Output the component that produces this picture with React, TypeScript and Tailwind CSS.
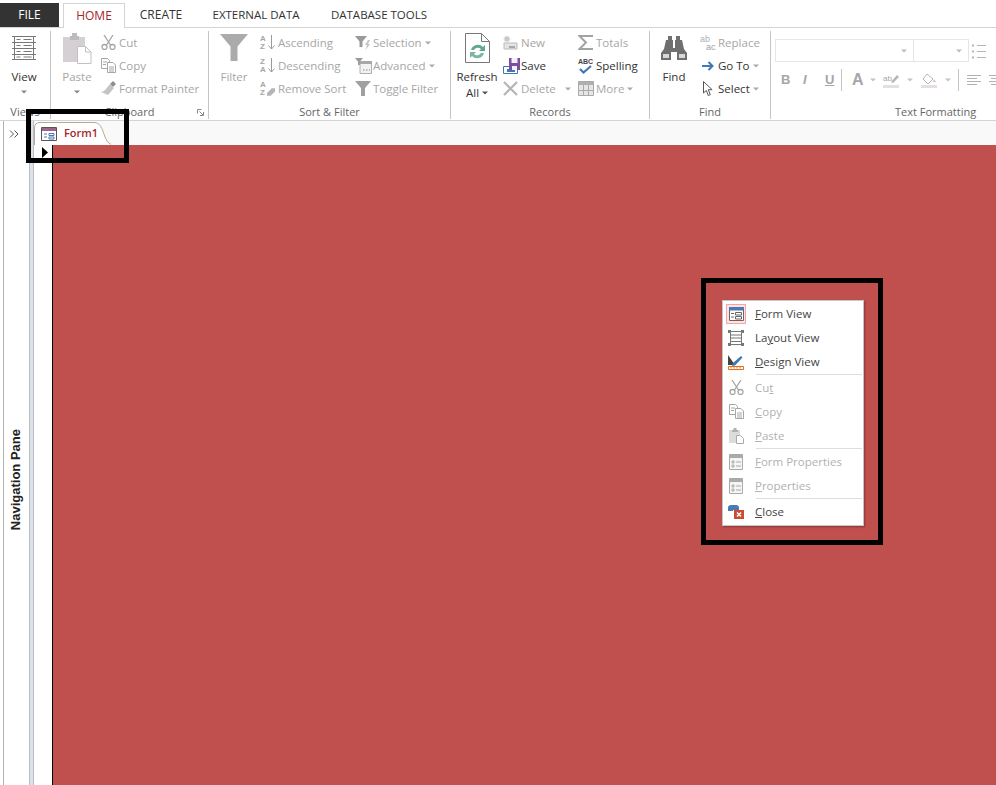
import type { ReactNode } from 'react';

const DIS = '#a6a6a6';
const DIS_LIGHT = '#d4d0d4';

function Caret({ className = '' }: { className?: string }) {
  return (
    <svg width="6" height="4" viewBox="0 0 6 4" className={className}>
      <path d="M0 .5h6L3 3.500z" fill="currentColor" />
    </svg>
  );
}

// ---- ribbon icons ----
const ViewIcon = () => (
  <svg width="26" height="28" viewBox="0 0 26 28" fill="none" stroke="#777">
    <path d="M3.500 2.500h19v23h-19z" />
    <path d="M1 2.500h24M1 8.500h24M1 14.500h24M1 20.500h24M1 25.500h24" />
    <path d="M12.500 5.500h8M12.500 11.500h8M12.500 17.500h8M12.500 23h8M5.500 5.500h4M5.500 11.500h4M5.500 17.500h4M5.500 23h4" />
  </svg>
);
const PasteIcon = () => (
  <svg width="29" height="31" viewBox="0 0 29 31">
    <path d="M0 4h22v25H0z" fill={DIS_LIGHT} />
    <path d="M7 3h2V0h5v3h2v4H7z" fill="#bdb9bd" />
    <path d="M14.500 13.500h8l5.500 5.500v11.500H14.500z" fill="#fff" stroke="#c4c0c4" />
    <path d="M22.500 13.500v5.500H28" fill="none" stroke="#c4c0c4" />
  </svg>
);
const CutIcon = ({ c = DIS }: { c?: string }) => (
  <svg width="15" height="15" viewBox="0 0 15 15" fill="none" stroke={c} strokeWidth="1.300">
    <path d="M3 0l6.500 10M12 0L5.500 10" />
    <circle cx="3.500" cy="12" r="2.500" />
    <circle cx="11.500" cy="12" r="2.500" />
  </svg>
);
const CopyIcon = ({ c = DIS }: { c?: string }) => (
  <svg width="15" height="15" viewBox="0 0 15 15" fill="#fff" stroke={c}>
    <path d="M.5.500h6l2 2v8h-8z" />
    <path d="M6.500 4.500h5.500l2.500 2.500v7.500h-8z" />
    <path d="M2 4h4M2 6.500h3M8 9h5M8 11h5M8 13h5" />
  </svg>
);
const PainterIcon = () => (
  <svg width="18" height="15" viewBox="0 0 18 15">
    <path d="M12 0l3 3-3 3-3-3z" fill="#8d8d8d" />
    <path d="M9 3l4 4-6 7-7-3c3 0 5-3 9-8z" fill="#c4c4c4" />
  </svg>
);
const FilterIcon = () => (
  <svg width="28" height="28" viewBox="0 0 28 28">
    <path d="M0 0h28L17.500 12.500V27h-7V12.500z" fill="#ababab" />
  </svg>
);
const SortIcon = ({ top, bottom }: { top: string; bottom: string }) => (
  <span className="relative flex h-[15px] w-[15px] shrink-0 font-['Liberation_Sans',sans-serif] text-[8px] leading-[7.500px] text-[#a6a6a6]">
    <span className="flex w-[7px] flex-col font-bold">
      <span>{top}</span>
      <span>{bottom}</span>
    </span>
    <svg width="7" height="15" viewBox="0 0 7 15" fill="none" stroke="#9a9a9a" className="ml-[1px]">
      <path d="M3.500 0v14M.5 10.500l3 3.500 3-3.500" />
    </svg>
  </span>
);
const RemoveSortIcon = () => (
  <span className="relative flex h-[15px] w-[15px] shrink-0 font-['Liberation_Sans',sans-serif] text-[8px] leading-[7.500px] text-[#a6a6a6]">
    <span className="flex w-[7px] flex-col font-bold">
      <span>A</span>
      <span>Z</span>
    </span>
    <svg width="9" height="8" viewBox="0 0 9 8" className="mt-[7px]">
      <path d="M5 0h4v3L4 8H0V5z" fill="#b5b5b5" />
    </svg>
  </span>
);
const SelectionIcon = () => (
  <svg width="16" height="16" viewBox="0 0 16 16">
    <path d="M0 1h12L7.500 6.500V12H4.500V6.500z" fill="#9a9a9a" />
    <path d="M13 5l-3 5h2l-1.500 5L15 9h-2l2-4z" fill="#c4c4c4" />
  </svg>
);
const AdvancedIcon = () => (
  <svg width="17" height="16" viewBox="0 0 17 16">
    <path d="M0 0h8L5 3.500V7H3V3.500z" fill="#9a9a9a" />
    <path d="M5 3.500h11.500v12H5z" fill="#f2f2f2" stroke="#b0b0b0" />
    <path d="M5 3h12v3H5z" fill="#a8a8a8" />
    <path d="M8 12h1.500M11 12h1.500M14 12h1" stroke="#888" />
  </svg>
);
const ToggleIcon = () => (
  <svg width="16" height="15" viewBox="0 0 16 15">
    <path d="M0 0h16L10 7v8H6V7z" fill="#a0a0a0" />
  </svg>
);
const RefreshIcon = () => (
  <svg width="25" height="31" viewBox="0 0 25 31" fill="none">
    <path d="M.5.500h16l8 8v21H.5z" fill="#fff" stroke="#777" />
    <path d="M16.500.500v8h8" stroke="#777" />
    <path d="M6 17a7 7 0 0 1 12-3l2-2v6h-6l2-2a4.500 4.500 0 0 0-7 1z" fill="#62a88c" />
    <path d="M19 20a7 7 0 0 1-12 3l-2 2v-6h6l-2 2a4.500 4.500 0 0 0 7-1z" fill="#7bb7a0" />
  </svg>
);
const NewIcon = () => (
  <svg width="15" height="15" viewBox="0 0 15 15">
    <path d="M4 0l.8 2 2-.8L6 3l2 1-2 .8.800 2-2-.8L4 8l-.8-2-2 .8.800-2-2-.8 2-1-.800-1.800 2 .8z" fill="#c8c8c8" />
    <path d="M1 8h13v6H1z" fill="#e4e4e4" stroke="#bbb" />
    <path d="M6 11h6v2H6z" fill="#a8a8a8" />
  </svg>
);
const SaveIcon = () => (
  <svg width="18" height="16" viewBox="0 0 18 16">
    <path d="M.5 8.500h14v7H.5z" fill="#fff" stroke="#3f79b4" />
    <path d="M4 11h8v3H4z" fill="#3f79b4" />
    <path d="M6 0h11v12H6z" fill="#7c4ea0" />
    <path d="M8.500 0h6v5h-6zM9 8h5v4H9z" fill="#f4eef8" />
  </svg>
);
const DeleteIcon = () => (
  <svg width="15" height="15" viewBox="0 0 15 15" fill="none" stroke="#b4b4b4" strokeWidth="2.200">
    <path d="M1 1l13 13M14 1L1 14" />
  </svg>
);
const TotalsIcon = () => (
  <svg width="15" height="15" viewBox="0 0 15 15" fill="none" stroke="#a3a3a3" strokeWidth="2">
    <path d="M14 2V1H1.500L8 7.500 1.500 14H14v-1" />
  </svg>
);
const SpellIcon = () => (
  <span className="relative flex h-[16px] w-[15px] shrink-0 flex-col font-['Liberation_Sans',sans-serif] text-[7px] font-bold leading-[7px] text-[#444]">
    ABC
    <svg width="13" height="9" viewBox="0 0 13 9" fill="none" stroke="#3f79b4" strokeWidth="2.200" className="ml-[1px]">
      <path d="M1 4l3.500 3.500L12 1" />
    </svg>
  </span>
);
const MoreIcon = () => (
  <svg width="16" height="15" viewBox="0 0 16 15" fill="#e6e6e6" stroke="#aaa">
    <path d="M.5.500h15v14H.5z" />
    <path d="M1 1h14v3H1z" fill="#b0b0b0" stroke="none" />
    <path d="M.5 9.500h15M5.500 4v10M10.500 4v10" />
  </svg>
);
const BinocularIcon = () => (
  <svg width="26" height="24" viewBox="0 0 26 24" fill="#6f6f6f">
    <path d="M7 0h4v4H7zM15 0h4v4h-4z" />
    <path d="M5 4h7v8h2V4h7l2 9 3 4v7H16v-8h-6v8H0v-7l3-4z" />
    <path d="M2 18h6v4H2zM18 18h6v4h-6z" fill="#d8d8d8" />
  </svg>
);
const ReplaceIcon = () => (
  <span className="flex h-[15px] w-[17px] shrink-0 flex-col font-['Liberation_Sans',sans-serif] text-[9px] leading-[8px] text-[#b0b0b0]">
    <span>ab</span>
    <span className="pl-[6px] text-[#a0a0a0]">ac</span>
  </span>
);
const GoToIcon = () => (
  <svg width="12" height="10" viewBox="0 0 12 10" fill="none" stroke="#3f79b4" strokeWidth="2" className="ml-[2px]">
    <path d="M0 5h10M6.500 1L10.500 5l-4 4" />
  </svg>
);
const SelectIcon = () => (
  <svg width="10" height="16" viewBox="0 0 10 16" fill="#fff" stroke="#555" className="ml-[3px]">
    <path d="M.5.500v11.500l2.800-2.500 2 5 2-.8-2-5h3.800z" />
  </svg>
);

// ---- menu icons ----
const FormViewIcon = () => (
  <svg width="20" height="20" viewBox="0 0 20 20">
    <path d="M.5.500h19v19H.5z" fill="#fce4e4" stroke="#f5a3a3" />
    <path d="M3.500 3.500h14v13h-14z" fill="#fff" stroke="#666" />
    <path d="M3 3h15v3.500H3z" fill="#4a7ab0" />
    <path d="M5 9.500h3M5 13h3M9.500 8.500h6v2.500h-6zM9.500 12.500h6V15h-6z" fill="none" stroke="#666" />
  </svg>
);
const LayoutIcon = () => (
  <svg width="16" height="16" viewBox="0 0 16 16" fill="none" stroke="#777">
    <path d="M2.500 1.500h11v13h-11zM2.500 5h11M2.500 8h11M2.500 11.500h11" />
    <path d="M0 0h3v3H0zM13 0h3v3h-3zM0 13h3v3H0zM13 13h3v3h-3z" fill="#777" stroke="none" />
  </svg>
);
const DesignIcon = () => (
  <svg width="16" height="16" viewBox="0 0 16 16">
    <path d="M0 1l7 10H0z" fill="#444" />
    <path d="M5 9l8-7 1.500 1.500-7.500 8L4 12z" fill="#3f79b4" />
    <path d="M.5 12.500h15v3H.5z" fill="#fff" stroke="#e0701c" />
    <path d="M3 13v1.500M6 13v1.500M9 13v1.500M12 13v1.500" stroke="#e0701c" />
  </svg>
);
const MenuPasteIcon = () => (
  <svg width="15" height="16" viewBox="0 0 15 16">
    <path d="M0 2h11v13H0z" fill="#dcdcdc" />
    <path d="M3 2h1.500V0h3v2H9v2H3z" fill="#b0b0b0" />
    <path d="M7.500 7.500h4l3 3v5h-7z" fill="#fff" stroke="#aaa" />
  </svg>
);
const PropsIcon = () => (
  <svg width="14" height="16" viewBox="0 0 14 16" fill="none" stroke="#aaa">
    <path d="M.5.500h13v15H.5z" fill="#f5f5f5" />
    <path d="M1 1h12v3H1z" fill="#aaa" stroke="none" />
    <path d="M3 7h2v2H3zM3 11h2v2H3zM7 8h5M7 12h5" />
  </svg>
);
const CloseIcon = () => (
  <svg width="16" height="14" viewBox="0 0 16 14">
    <path d="M0 3c0-2 1-3 3-3h5c2 0 3 1 3 3v2H5v1H0z" fill="#4a7ab0" />
    <path d="M6 5h10v9H6z" fill="#cc4b32" />
    <path d="M9 7.500l4 4M13 7.500l-4 4" stroke="#fff" strokeWidth="1.500" />
  </svg>
);

// ---- ribbon pieces ----
function Group({ label, className, children }: { label: string; className: string; children: ReactNode }) {
  return (
    <div className={`relative flex shrink-0 flex-col border-r border-[#c6c6c6] ${className}`}>
      <div className="flex h-[70px]">{children}</div>
      <div className="flex-1 pt-[3px] text-center text-[11px] leading-[15px] text-[#666]">{label}</div>
    </div>
  );
}

function BigButton({ icon, label, caret, dim, className = '' }: { icon: ReactNode; label: string; caret?: boolean; dim?: boolean; className?: string }) {
  return (
    <div className={`flex flex-col items-center ${dim ? 'text-[#a6a6a6]' : 'text-[#333]'} ${className}`}>
      <div className="flex h-[34px] items-center">{icon}</div>
      <div className="pt-[4px] text-[11.500px] leading-[16px]">{label}</div>
      {caret && <Caret className="mt-[5px] text-[#888]" />}
    </div>
  );
}

function SmallButton({ icon, label, dim, caret }: { icon: ReactNode; label: string; dim?: boolean; caret?: boolean }) {
  return (
    <div className={`flex h-[23px] items-center whitespace-nowrap text-[11.500px] ${dim ? 'text-[#a6a6a6]' : 'text-[#333]'}`}>
      <span className="flex w-[18px] shrink-0">{icon}</span>
      {label}
      {caret && <Caret className="ml-[3px] text-[#aaa]" />}
    </div>
  );
}

function MenuItem({ icon, before = '', mark, after, dim }: { icon: ReactNode; before?: string; mark: string; after: string; dim?: boolean }) {
  return (
    <div className={`flex h-[24px] shrink-0 items-center text-[11.500px] ${dim ? 'text-[#b1b1b1]' : 'text-[#444]'}`}>
      <span className="flex w-[26px] shrink-0 justify-center">{icon}</span>
      <span className="ml-[6px] whitespace-pre">
        {before}
        <span className="underline">{mark}</span>
        {after}
      </span>
    </div>
  );
}

const MenuLine = () => (
  <div className="ml-[33px] mr-[1px] h-[2px] shrink-0 border-t border-[#dedede]" />
);

export default function App() {
  return (
    <div className="relative flex h-[785px] w-[996px] flex-col overflow-hidden bg-white font-['Open_Sans',sans-serif]">
      {/* Tabs */}
      <div className="flex h-[28px] shrink-0 whitespace-nowrap border-b border-[#d4d4d4] pt-[3px] text-[12px] text-[#333]">
        <div className="flex w-[59px] items-center justify-center bg-[#333333] text-white">FILE</div>
        <div className="ml-[4px] flex h-[25px] w-[62px] items-center justify-center border border-b-0 border-[#d4d4d4] bg-white text-[#a4262c]">HOME</div>
        <div className="flex w-[72px] items-center justify-center">CREATE</div>
        <div className="ml-[14px] flex w-[90px] items-center justify-center text-[11.500px]">EXTERNAL DATA</div>
        <div className="ml-[29px] flex w-[98px] items-center justify-center text-[11.500px]">DATABASE TOOLS</div>
      </div>

      {/* Ribbon */}
      <div className="flex h-[93px] shrink-0 border-b border-[#d4d4d4] pb-[1px] pt-[3px]">
        <Group label="Views" className="w-[51px]">
          <BigButton icon={<ViewIcon />} label="View" caret className="w-[48px]" />
        </Group>
        <Group label="Clipboard" className="w-[158px]">
          <BigButton icon={<PasteIcon />} label="Paste" caret dim className="ml-[7px] w-[38px]" />
          <div className="ml-[5px] flex flex-col">
            <SmallButton icon={<CutIcon />} label="Cut" dim />
            <SmallButton icon={<CopyIcon />} label="Copy" dim />
            <SmallButton icon={<PainterIcon />} label="Format Painter" dim />
          </div>
          <svg width="7" height="7" viewBox="0 0 7 7" fill="none" stroke="#888" className="absolute bottom-[3px] right-[4px]">
            <path d="M.5.500h4M.5.500v4M2.500 2.500l3.500 3.500M6.500 3v3.500H3" />
          </svg>
        </Group>
        <Group label="Sort & Filter" className="w-[242px]">
          <BigButton icon={<FilterIcon />} label="Filter" dim className="ml-[8px] w-[34px]" />
          <div className="ml-[9px] flex w-[95px] flex-col">
            <SmallButton icon={<SortIcon top="A" bottom="Z" />} label="Ascending" dim />
            <SmallButton icon={<SortIcon top="Z" bottom="A" />} label="Descending" dim />
            <SmallButton icon={<RemoveSortIcon />} label="Remove Sort" dim />
          </div>
          <div className="flex flex-col">
            <SmallButton icon={<SelectionIcon />} label="Selection" dim caret />
            <SmallButton icon={<AdvancedIcon />} label="Advanced" dim caret />
            <SmallButton icon={<ToggleIcon />} label="Toggle Filter" dim />
          </div>
        </Group>
        <Group label="Records" className="w-[199px]">
          <div className="ml-[3px] flex w-[46px] flex-col items-center text-[#333]">
            <div className="flex h-[34px] items-center"><RefreshIcon /></div>
            <div className="pt-[4px] text-[11.500px] leading-[16px]">Refresh</div>
            <div className="flex items-center text-[11.500px] leading-[15px]">All<Caret className="ml-[3px] text-[#555]" /></div>
          </div>
          <div className="ml-[3px] flex w-[75px] flex-col">
            <SmallButton icon={<NewIcon />} label="New" dim />
            <SmallButton icon={<SaveIcon />} label="Save" />
            <div className="flex items-center">
              <SmallButton icon={<DeleteIcon />} label="Delete" dim />
              <Caret className="ml-[9px] text-[#aaa]" />
            </div>
          </div>
          <div className="flex flex-col">
            <SmallButton icon={<TotalsIcon />} label="Totals" dim />
            <SmallButton icon={<SpellIcon />} label="Spelling" />
            <SmallButton icon={<MoreIcon />} label="More" dim caret />
          </div>
        </Group>
        <Group label="Find" className="w-[121px]">
          <BigButton icon={<BinocularIcon />} label="Find" className="ml-[5px] w-[38px]" />
          <div className="ml-[7px] flex flex-col">
            <SmallButton icon={<ReplaceIcon />} label="Replace" dim />
            <SmallButton icon={<GoToIcon />} label="Go To" caret />
            <SmallButton icon={<SelectIcon />} label="Select" caret />
          </div>
        </Group>
        <div className="flex min-w-0 flex-1 flex-col overflow-hidden">
          <div className="flex h-[70px] flex-col pl-[4px] pt-[8px]">
            <div className="flex h-[23px] w-[260px] items-center">
              <div className="flex h-[23px] w-[139px] items-center justify-end border border-[#e6e6e6] pr-[6px] text-[#bbb]"><Caret /></div>
              <div className="flex h-[23px] w-[55px] items-center justify-end border border-l-0 border-[#e6e6e6] pr-[6px] text-[#bbb]"><Caret /></div>
              <svg width="14" height="16" viewBox="0 0 14 16" className="ml-[3px]" fill="none" stroke="#b5b5b5">
                <path d="M5 2.500h9M5 8.500h9M5 14.500h9" />
                <path d="M0 1.500h2v2H0zM0 7.500h2v2H0zM0 13.500h2v2H0z" fill="#b5b5b5" stroke="none" />
              </svg>
            </div>
            <div className="mt-[7px] flex h-[22px] w-[260px] items-center text-[#a6a6a6]">
              <span className="ml-[6px] w-[22px] font-['Liberation_Sans',sans-serif] text-[13px] font-bold">B</span>
              <span className="w-[22px] font-['Liberation_Sans',sans-serif] text-[13px] font-bold italic">I</span>
              <span className="w-[16px] font-['Liberation_Sans',sans-serif] text-[13px] font-bold underline">U</span>
              <span className="h-[22px] w-px bg-[#c6c6c6]" />
              <span className="ml-[10px] w-[18px] font-['Liberation_Sans',sans-serif] text-[16px] font-bold">A</span>
              <Caret className="text-[#c4c4c4]" />
              <svg width="16" height="15" viewBox="0 0 16 15" className="ml-[7px]">
                <path d="M0 12h16v3H0z" fill="#e4dfe4" />
                <path d="M8 9l6-7 2 2-6 6z" fill="#b5b5b5" />
                <text x="0" y="8" fontSize="8" fill="#a6a6a6" fontFamily="Liberation Sans">ab</text>
              </svg>
              <Caret className="ml-[8px] text-[#c4c4c4]" />
              <svg width="16" height="15" viewBox="0 0 16 15" className="ml-[8px]" fill="none">
                <path d="M0 12h16v3H0z" fill="#e8dde0" />
                <path d="M6 1l6 5-5 5-5-5z" stroke="#b5b5b5" />
                <path d="M13 6l2 3h-3z" fill="#c4c4c4" />
              </svg>
              <Caret className="ml-[8px] text-[#c4c4c4]" />
              <span className="ml-[7px] h-[22px] w-px bg-[#c6c6c6]" />
              <svg width="14" height="11" viewBox="0 0 14 11" className="ml-[8px] shrink-0" stroke="#b0b0b0">
                <path d="M0 .5h14M0 3.500h10M0 6.500h14M0 9.500h10" />
              </svg>
              <svg width="14" height="11" viewBox="0 0 14 11" className="ml-[8px] shrink-0" stroke="#b0b0b0">
                <path d="M0 .5h14M2 3.500h10M0 6.500h14M2 9.500h10" />
              </svg>
            </div>
          </div>
          <div className="flex-1 whitespace-nowrap pl-[124px] pt-[3px] text-[11px] leading-[15px] text-[#666]">Text Formatting</div>
        </div>
      </div>

      {/* Document area */}
      <div className="flex min-h-0 flex-1">
        <div className="ml-[3px] flex w-[26px] shrink-0 flex-col border-l border-[#b4b4b4]">
          <div className="flex h-[24px] items-center justify-center pr-[5px] pt-[1px]">
            <svg width="10" height="8" viewBox="0 0 10 8" fill="none" stroke="#555">
              <path d="M1 .5l3.500 3.500L1 7.500M5.500.5L9 4 5.500 7.500" />
            </svg>
          </div>
          <div className="flex flex-1 items-center justify-center pr-[2px] pt-[29px]">
            <span className="rotate-180 font-['Liberation_Sans',sans-serif] text-[13px] font-bold text-[#222] [writing-mode:vertical-rl]">Navigation Pane</span>
          </div>
        </div>
        <div className="w-[5px] shrink-0 border-x border-[#b9bec6] bg-[#dde1e8]" />
        <div className="flex min-w-0 flex-1 flex-col">
          <div className="flex h-[24px] shrink-0 items-end bg-[#f9f9f9]">
            <div className="relative flex h-[23px] w-[77px] items-center pl-[7px]">
              <svg width="77" height="23" viewBox="0 0 77 23" fill="#fff" stroke="#b8ab95" className="absolute left-0 top-0">
                <path d="M.5 23V6Q.5.500 6 .500H60C66 .500 68 6 71 15Q73 21 77 22.500" />
              </svg>
              <svg width="16" height="14" viewBox="0 0 16 14" className="relative">
                <path d="M.5.500h15v13H.5z" fill="#fff" stroke="#555" />
                <path d="M1 1h14v3H1z" fill="#a0648c" />
                <path d="M3 7h3M3 10h3M8 6.500h5v2H8zM8 10h5v2H8z" fill="none" stroke="#4a7ab0" />
              </svg>
              <span className="relative ml-[7px] text-[11px] font-semibold text-[#a4262c]">Form1</span>
            </div>
          </div>
          <div className="flex min-h-0 flex-1">
            <div className="relative w-[19px] shrink-0 border-r border-black">
              <svg width="6" height="11" viewBox="0 0 6 11" className="absolute left-[8px] top-[2px]">
                <path d="M0 0l6 5.500L0 11z" fill="#000" />
              </svg>
            </div>
            <div className="flex-1 bg-[#c0504d]" />
          </div>
        </div>
      </div>

      {/* Annotation box round the form tab */}
      <div className="absolute left-[26px] top-[109px] h-[54px] w-[103px] border-[5px] border-black" />

      {/* Annotation box with the context menu inside */}
      <div className="absolute left-[701px] top-[278px] flex h-[267px] w-[182px] items-center justify-center border-[5px] border-black pl-[2px] pt-[2px]">
        <div className="flex h-[226px] w-[142px] flex-col border border-[#c6c6c6] bg-white py-[1px] shadow-[1px_1px_2px_rgba(0,0,0,0.3)]">
          <MenuItem icon={<FormViewIcon />} mark="F" after="orm View" />
          <MenuItem icon={<LayoutIcon />} before="La" mark="y" after="out View" />
          <MenuItem icon={<DesignIcon />} mark="D" after="esign View" />
          <MenuLine />
          <MenuItem icon={<CutIcon />} before="Cu" mark="t" after="" dim />
          <MenuItem icon={<CopyIcon />} mark="C" after="opy" dim />
          <MenuItem icon={<MenuPasteIcon />} mark="P" after="aste" dim />
          <MenuLine />
          <MenuItem icon={<PropsIcon />} mark="F" after="orm Properties" dim />
          <MenuItem icon={<PropsIcon />} mark="P" after="roperties" dim />
          <MenuLine />
          <MenuItem icon={<CloseIcon />} mark="C" after="lose" />
        </div>
      </div>
    </div>
  );
}
